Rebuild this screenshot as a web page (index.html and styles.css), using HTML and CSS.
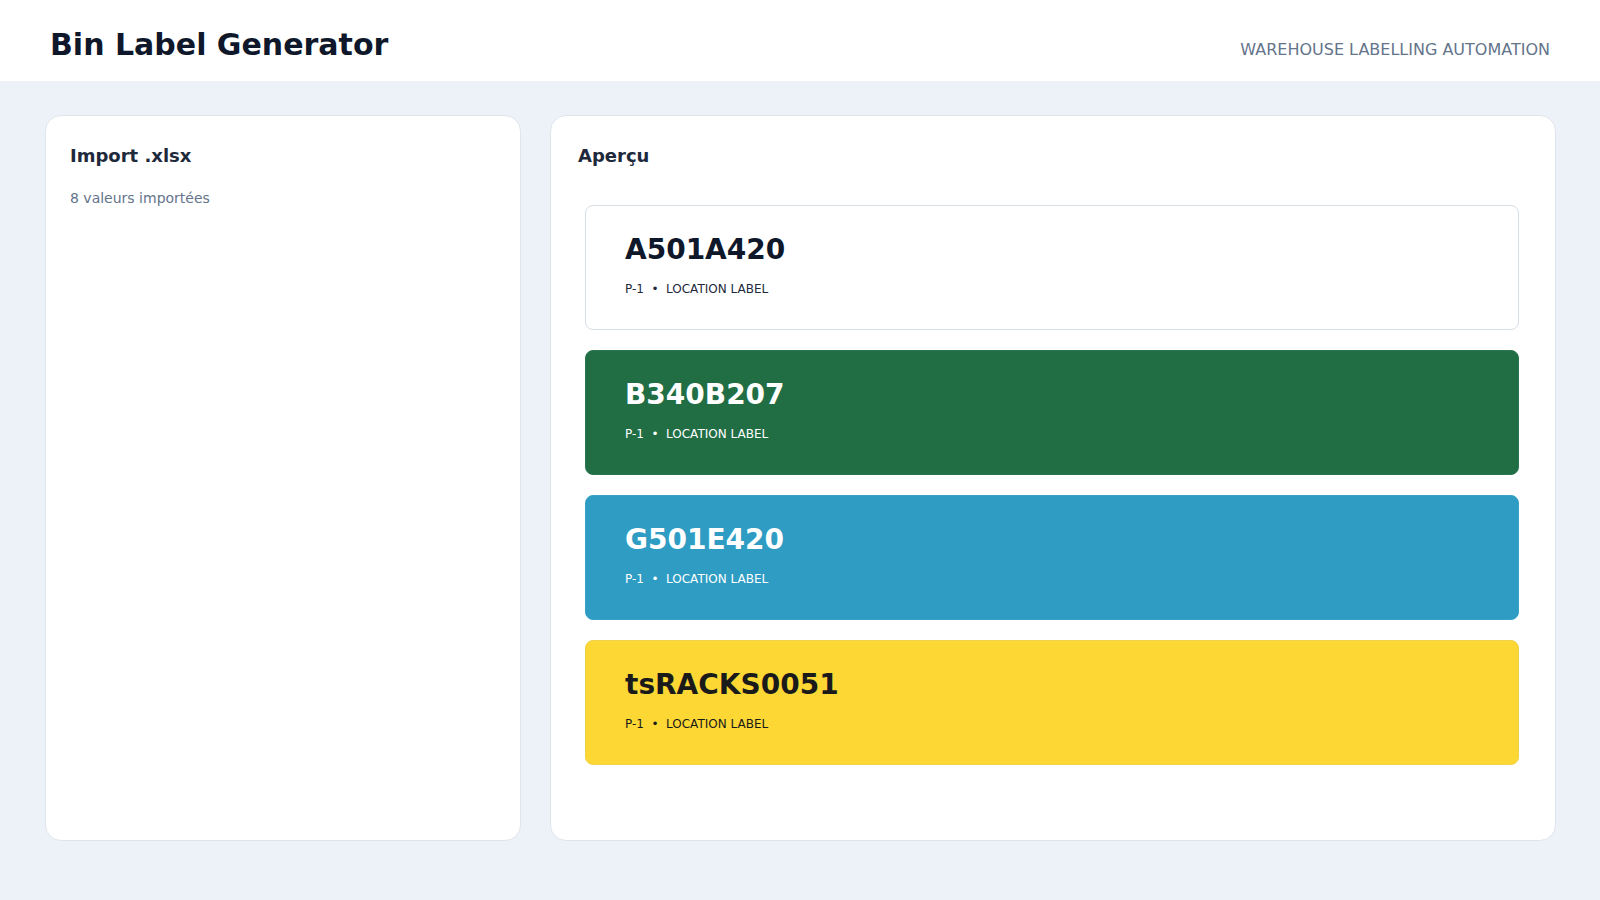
FILE: index.html
```html
<!doctype html>
<html lang="fr">
<head>
    <meta charset="UTF-8">
    <meta name="viewport" content="width=device-width, initial-scale=1.0">
    <title>Bin Label Generator</title>
    <link rel="stylesheet" href="styles.css">
</head>
<body>
<div class="header">
    <div class="heading">Bin Label Generator</div>
    <div class="tagline">WAREHOUSE LABELLING AUTOMATION</div>
</div>
<div class="main">
    <div class="panel import">
        <div class="panel-title">Import .xlsx</div>
        <div class="count">8 valeurs importées</div>
    </div>
    <div class="panel preview">
        <div class="panel-title">Aperçu</div>
        <div class="labels">
            <div class="label white">
                <div class="code">A501A420</div>
                <div class="meta">P-1<span class="dot">•</span>LOCATION LABEL</div>
            </div>
            <div class="label green">
                <div class="code">B340B207</div>
                <div class="meta">P-1<span class="dot">•</span>LOCATION LABEL</div>
            </div>
            <div class="label blue">
                <div class="code">G501E420</div>
                <div class="meta">P-1<span class="dot">•</span>LOCATION LABEL</div>
            </div>
            <div class="label yellow">
                <div class="code">tsRACKS0051</div>
                <div class="meta">P-1<span class="dot">•</span>LOCATION LABEL</div>
            </div>
        </div>
    </div>
</div>
</body>
</html>
```
FILE: styles.css
```css
body
{
    margin: 0;
    padding: 0;
    background-color: #edf2f8;
    font-family: "DejaVu Sans", sans-serif;
    height: 100vh;
}
.header
{
    display: flex;
    justify-content: space-between;
    align-items: baseline;
    background-color: #ffffff;
    padding: 27px 50px 18px 50px;
}
.heading
{
    font-size: 30px;
    line-height: 36px;
    font-weight: bold;
    color: #0f172a;
}
.tagline
{
    font-size: 16px;
    color: #64748b;
}
.main
{
    display: grid;
    grid-template-columns: 476px 1fr;
    gap: 29px;
    padding: 34px 44px 0 45px;
}
.panel
{
    background-color: #ffffff;
    border: 1px solid #dfe5ec;
    border-radius: 16px;
    height: 726px;
    box-sizing: border-box;
    padding-top: 29px;
}
.import
{
    padding-left: 24px;
    padding-right: 24px;
}
.preview
{
    padding-left: 27px;
    padding-right: 26px;
}
.panel-title
{
    font-size: 18px;
    line-height: 1.2;
    font-weight: bold;
    color: #1e293b;
}
.count
{
    margin-top: 23px;
    font-size: 14px;
    line-height: 1.2;
    color: #64748b;
}
.labels
{
    display: flex;
    flex-direction: column;
    gap: 20px;
    margin-top: 38px;
    padding: 0 10px 0 7px;
}
.label
{
    min-height: 125px;
    box-sizing: border-box;
    border: 1px solid transparent;
    border-radius: 8px;
    padding: 27px 39px 0 39px;
}
.code
{
    font-size: 28px;
    line-height: 1.2;
    font-weight: bold;
}
.meta
{
    margin-top: 16px;
    font-size: 12px;
    line-height: 1.2;
}
.dot
{
    margin: 0 7.5px;
}
.white
{
    background-color: #ffffff;
    border-color: #d9dfe7;
    color: #0f172a;
}
.white .meta
{
    color: #1e293b;
}
.green
{
    background-color: #216e45;
    border-color: #2a7650;
    color: #ffffff;
}
.blue
{
    background-color: #2e9cc3;
    border-color: #37a2c7;
    color: #ffffff;
}
.yellow
{
    background-color: #fdd835;
    border-color: #ecd34a;
    color: #1a1a1a;
}
```
